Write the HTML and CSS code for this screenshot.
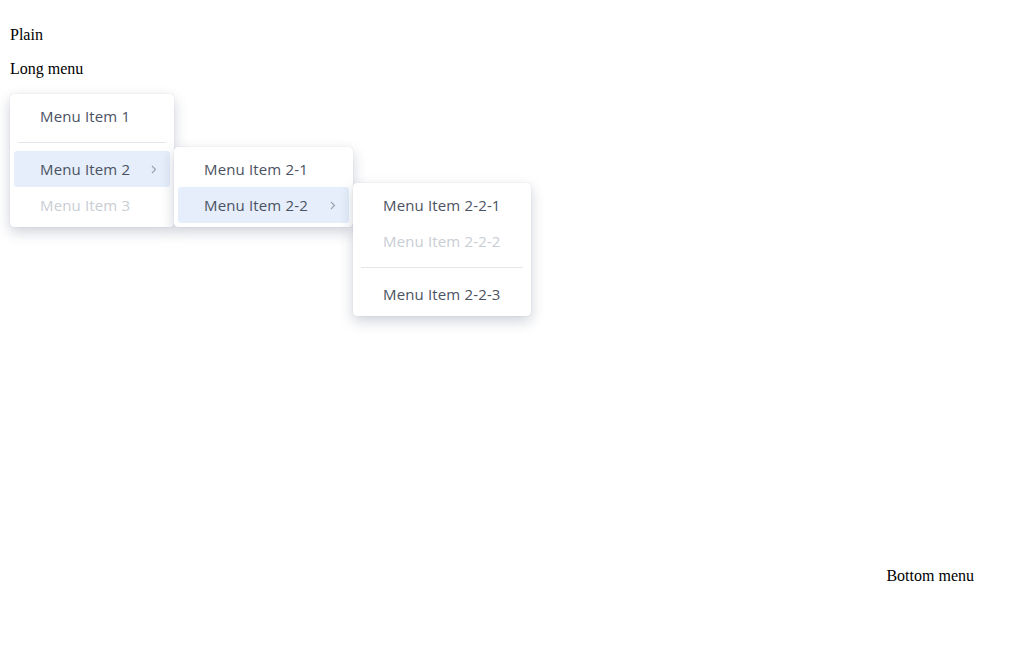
FILE: index.html
```html
<!DOCTYPE html>
<html>
<head>
<meta charset="utf-8">
<link rel="stylesheet" href="styles.css">
</head>
<body>
<div class="page">
  <p class="label">Plain</p>
  <p class="label">Long menu</p>
  <div class="menu menu-1">
    <div class="item">Menu Item 1</div>
    <div class="divider"></div>
    <div class="item active has-sub">
      <span>Menu Item 2</span>
      <svg class="chev" width="6" height="9" viewBox="0 0 6 9"><polyline points="1,1 4.5,4.5 1,8" fill="none" stroke="#9aa1ad" stroke-width="1.1"/></svg>
      <div class="menu sub menu-2">
        <div class="item">Menu Item 2-1</div>
        <div class="item active has-sub">
          <span>Menu Item 2-2</span>
          <svg class="chev" width="6" height="9" viewBox="0 0 6 9"><polyline points="1,1 4.5,4.5 1,8" fill="none" stroke="#9aa1ad" stroke-width="1.1"/></svg>
          <div class="menu sub menu-3">
            <div class="item">Menu Item 2-2-1</div>
            <div class="item disabled">Menu Item 2-2-2</div>
            <div class="divider"></div>
            <div class="item">Menu Item 2-2-3</div>
          </div>
        </div>
      </div>
    </div>
    <div class="item disabled">Menu Item 3</div>
  </div>
  <p class="label bottom">Bottom menu</p>
</div>
</body>
</html>
```
FILE: styles.css
```css
html, body {
  margin: 0;
  padding: 0;
  background: #fff;
}
.page {
  box-sizing: border-box;
  height: 651px;
  padding: 10px;
  display: flex;
  flex-direction: column;
  align-items: flex-start;
  font-family: "Liberation Serif", serif;
  font-size: 16px;
  color: #000;
}
.label {
  margin: 16px 0 0 0;
  line-height: 18px;
}
.bottom {
  margin-top: auto;
  margin-bottom: 56px;
  margin-right: 40px;
  align-self: flex-end;
}
.menu {
  box-sizing: border-box;
  margin-top: 16px;
  padding: 4px;
  background: #fff;
  border-radius: 4px;
  box-shadow: 0 0 1px rgba(30, 45, 80, 0.2), 0 5px 14px rgba(30, 45, 80, 0.22);
  font-family: "Open Sans", "Noto Sans", sans-serif;
  font-size: 15px;
  color: #4b5263;
}
.menu-1 { width: 164px; }
.sub {
  position: absolute;
  margin-top: 0;
  top: -4px;
  z-index: 2;
}
.menu-2 { width: 179px; left: 160px; }
.menu-3 { width: 178px; left: 175px; }
.item {
  position: relative;
  height: 36px;
  display: flex;
  align-items: center;
  justify-content: space-between;
  padding: 0 13px 0 26px;
  border-radius: 3px;
  white-space: nowrap;
  letter-spacing: 0.15px;
}
.item.active {
  background: #e5eefa;
}
.item.disabled {
  color: #c9cdd4;
}
.chev {
  display: block;
}
.divider {
  height: 1px;
  background: #e4e6eb;
  margin: 8px 4px;
}
```
